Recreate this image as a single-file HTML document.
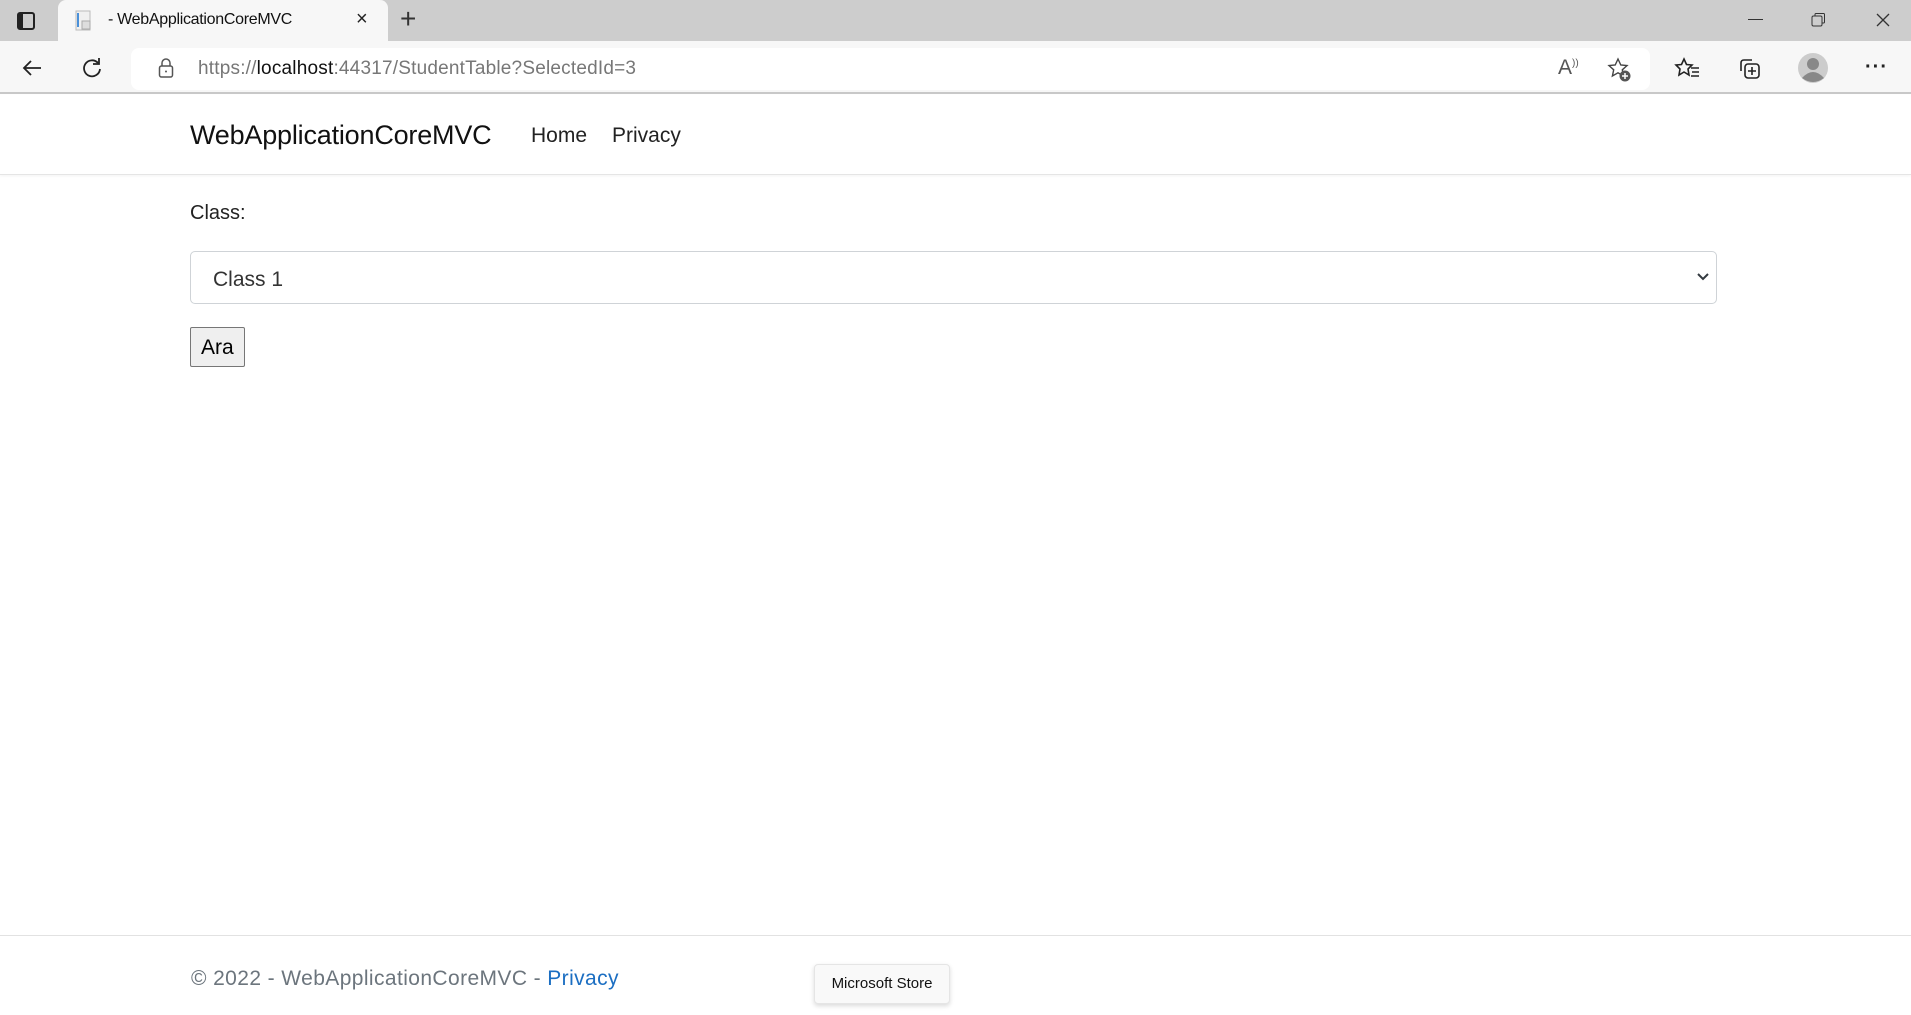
<!DOCTYPE html>
<html><head><meta charset="utf-8"><style>
*{box-sizing:border-box;margin:0;padding:0}
body{width:1911px;height:1015px;overflow:hidden;font-family:"Liberation Sans",sans-serif;background:#fff;position:relative;color:#212529}
.abs{position:absolute}
.tabs{left:0;top:0;width:1911px;height:41px;background:#cdcdcd}
.tab{left:58px;top:0;width:330px;height:42px;background:#f7f7f7;border-radius:8px 8px 0 0}
.bar{left:0;top:41px;width:1911px;height:53px;background:#f7f7f7;border-bottom:2px solid #c8c8c8}
.url{left:131px;top:48px;width:1519px;height:42px;background:#fff;border-radius:8px}
.nav{left:0;top:95px;width:1911px;height:80px;border-bottom:1px solid #e5e5e5;box-shadow:0 1px 3px rgba(0,0,0,.05)}
</style></head><body>
<div class="abs tabs"></div>
<div class="abs tab"></div>
<svg class="abs" style="left:15px;top:10px" width="22" height="22"><rect x="3" y="3" width="16" height="16" rx="2" fill="none" stroke="#222" stroke-width="2"/><rect x="3" y="3" width="5" height="16" fill="#222"/></svg>
<svg class="abs" style="left:73px;top:9px" width="22" height="24"><rect x="3" y="2" width="14" height="19" fill="#f0f0f0" stroke="#bbb"/><rect x="4" y="4" width="2" height="14" fill="#4a90d9"/><rect x="9" y="12" width="8" height="8" fill="#ddd" stroke="#aaa"/></svg>
<div class="abs" style="left:108px;top:11px;font-size:16px;color:#111;letter-spacing:-0.3px">- WebApplicationCoreMVC</div>
<div class="abs" style="left:356px;top:8px;font-size:20px;color:#222">×</div>
<div class="abs" style="left:400px;top:3px;font-size:28px;color:#333;font-weight:300">+</div>
<div class="abs" style="left:1748px;top:19px;width:15px;height:1px;background:#333"></div>
<svg class="abs" style="left:1811px;top:12px" width="16" height="16"><rect x="1" y="4" width="10" height="10" rx="1.5" fill="none" stroke="#333"/><path d="M4 4V2.5Q4 1.5 5 1.5H12.5Q13.5 1.5 13.5 2.5V10Q13.5 11 12.5 11H11" fill="none" stroke="#333"/></svg>
<svg class="abs" style="left:1875px;top:12px" width="16" height="16"><path d="M2 2L14 14M14 2L2 14" stroke="#333" stroke-width="1.3"/></svg>
<div class="abs bar"></div>
<div class="abs url"></div>
<svg class="abs" style="left:20px;top:56px" width="24" height="24"><path d="M21 12H4M11 5L4 12L11 19" fill="none" stroke="#222" stroke-width="1.8"/></svg>
<svg class="abs" style="left:80px;top:56px" width="24" height="24"><path d="M18 7A8 8 0 1 0 20 13" fill="none" stroke="#222" stroke-width="1.8"/><path d="M19 2V8H13" fill="none" stroke="#222" stroke-width="1.8"/></svg>
<svg class="abs" style="left:156px;top:56px" width="20" height="24"><path d="M6 10V7A4 4 0 0 1 14 7V10" fill="none" stroke="#555" stroke-width="1.5"/><rect x="3.5" y="10" width="13" height="11" rx="2" fill="none" stroke="#555" stroke-width="1.5"/><circle cx="10" cy="15.5" r="1" fill="#555"/></svg>
<div class="abs" style="left:198px;top:58px;font-size:19px;color:#777;letter-spacing:0.2px">https://<span style="color:#111">localhost</span>:44317/StudentTable?SelectedId=3</div>
<div class="abs" style="left:1558px;top:56px;font-size:21px;color:#555">A<sup style="font-size:10px">))</sup></div>
<svg class="abs" style="left:1606px;top:56px" width="28" height="28"><path d="M12 3L14.8 9L21 9.6L16.3 13.8L17.6 20L12 16.8L6.4 20L7.7 13.8L3 9.6L9.2 9Z" fill="none" stroke="#444" stroke-width="1.4"/><circle cx="19" cy="20" r="5.5" fill="#555"/><path d="M19 17V23M16 20H22" stroke="#fff" stroke-width="1.5"/></svg>
<svg class="abs" style="left:1674px;top:56px" width="28" height="28"><path d="M10 3L12.5 8.5L18 9L14 13L15 19L10 16L5 19L6 13L2 9L7.5 8.5Z" fill="none" stroke="#222" stroke-width="1.6"/><path d="M17 12H25M18 16H25M17 20H25" stroke="#222" stroke-width="1.6"/></svg>
<svg class="abs" style="left:1736px;top:56px" width="28" height="28"><path d="M5 15V7Q5 4 8 4H16" fill="none" stroke="#222" stroke-width="1.6"/><rect x="9" y="8" width="14" height="14" rx="3" fill="none" stroke="#222" stroke-width="1.6"/><path d="M16 11V19M12 15H20" stroke="#222" stroke-width="1.6"/></svg>
<svg class="abs" style="left:1797px;top:52px" width="32" height="32"><circle cx="16" cy="16" r="15" fill="#ccc"/><circle cx="16" cy="12" r="6" fill="#888"/><path d="M5 26Q16 14 27 26Q16 34 5 26Z" fill="#888"/></svg>
<div class="abs" style="left:1865px;top:56px;font-size:20px;color:#222;letter-spacing:1px;font-weight:bold">···</div>
<div class="abs nav"></div>
<div class="abs" style="left:190px;top:120px;font-size:27px;color:#111;letter-spacing:-0.2px">WebApplicationCoreMVC</div>
<div class="abs" style="left:531px;top:124px;font-size:21px;color:#222">Home</div>
<div class="abs" style="left:612px;top:124px;font-size:21px;color:#222">Privacy</div>
<div class="abs" style="left:190px;top:202px;font-size:20px;color:#222">Class:</div>
<div class="abs" style="left:190px;top:251px;width:1527px;height:53px;border:1px solid #cfd3d7;border-radius:5px"></div>
<div class="abs" style="left:213px;top:268px;font-size:21px;color:#333">Class 1</div>
<svg class="abs" style="left:1696px;top:272px" width="14" height="10"><path d="M2 2L7 7L12 2" fill="none" stroke="#343a40" stroke-width="2"/></svg>
<div class="abs" style="left:190px;top:327px;width:55px;height:40px;border:1px solid #767676;border-radius:2px;background:#efefef"></div>
<div class="abs" style="left:201px;top:336px;font-size:21px;color:#000">Ara</div>
<div class="abs" style="left:0;top:935px;width:1911px;height:1px;background:#e2e2e2"></div>
<div class="abs" style="left:191px;top:967px;font-size:21px;color:#6c757d;letter-spacing:0.4px">© 2022 - WebApplicationCoreMVC - <span style="color:#1b6ec2">Privacy</span></div>
<div class="abs" style="left:814px;top:964px;width:136px;height:40px;background:#f9f9f9;border:1px solid #e5e5e5;border-radius:4px;box-shadow:0 2px 5px rgba(0,0,0,.15);font-size:15px;color:#111;text-align:center;line-height:38px">Microsoft Store</div>
</body></html>
